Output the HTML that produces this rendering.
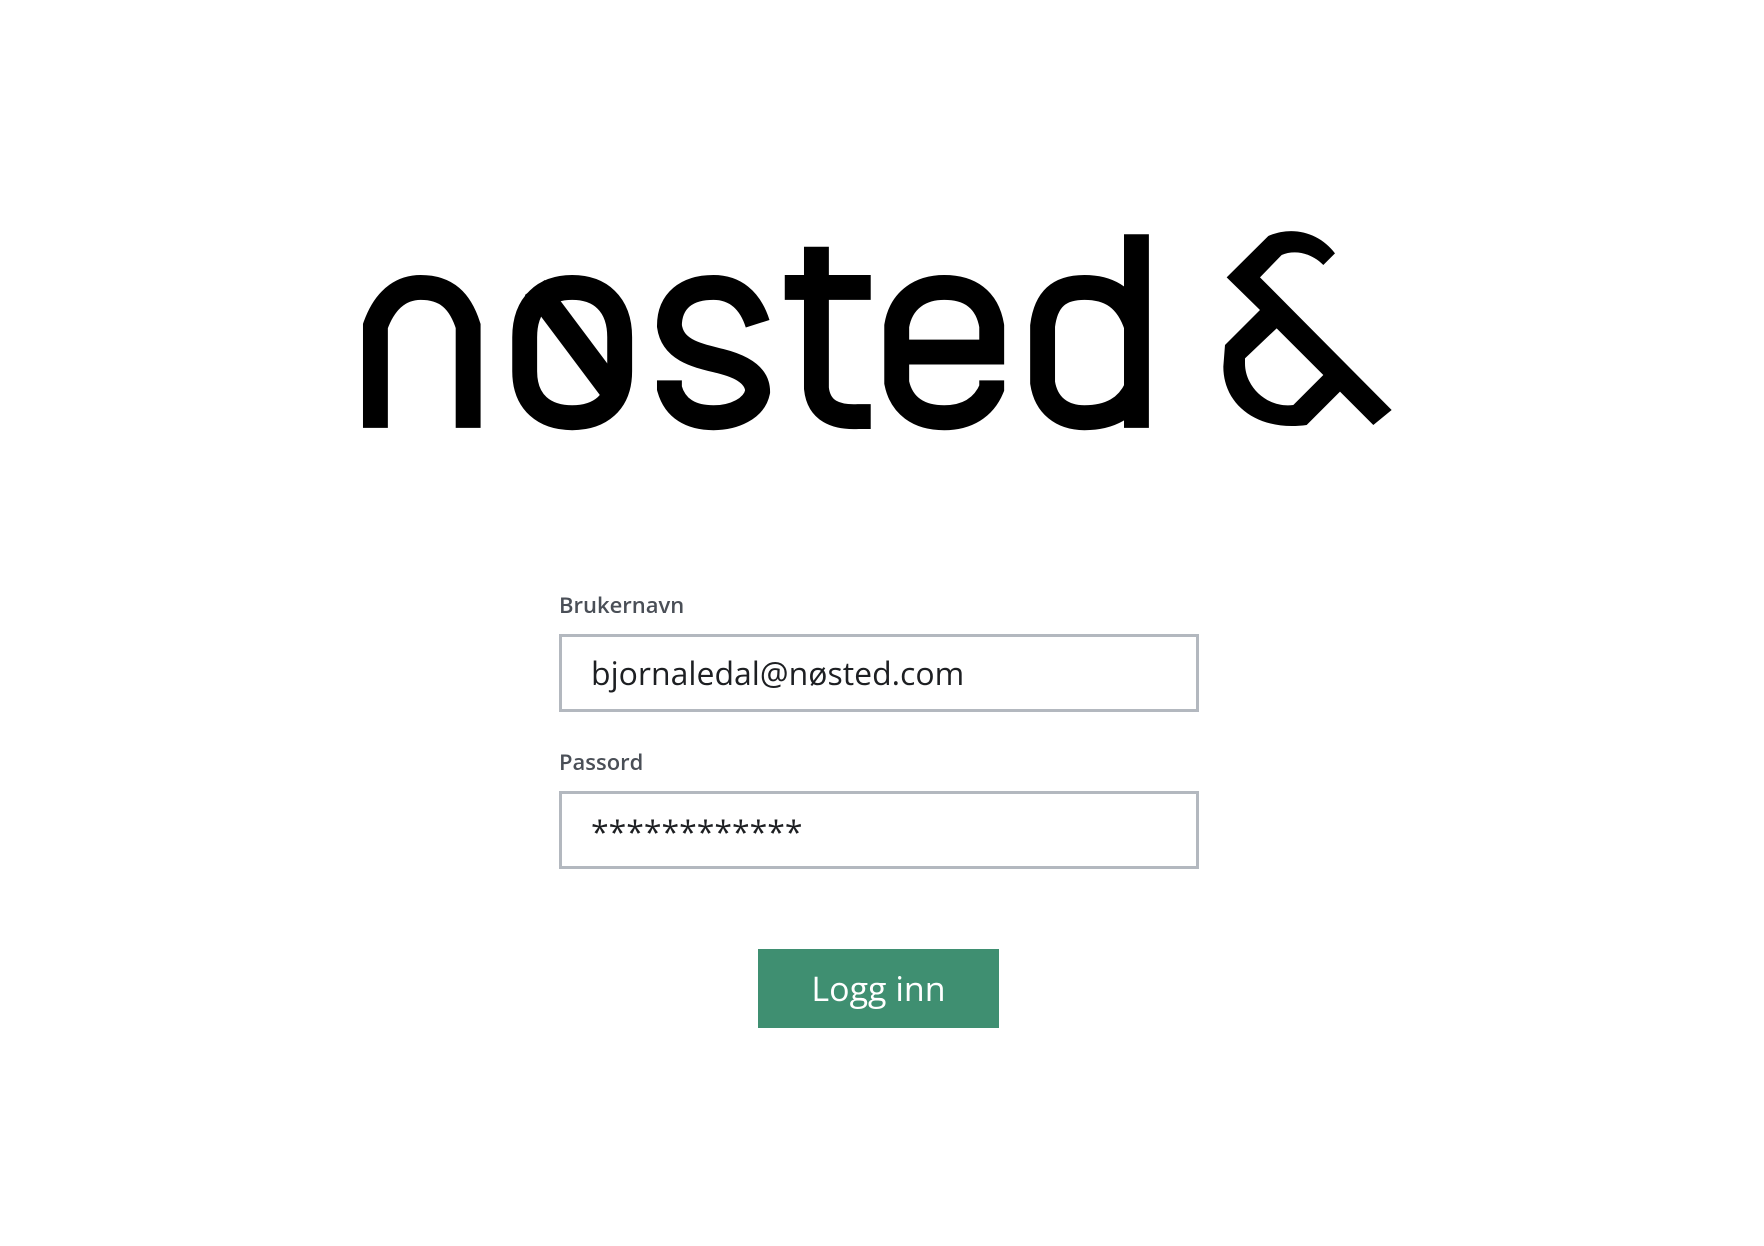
<!DOCTYPE html>
<html><head><meta charset="utf-8"><style>
html,body{margin:0;padding:0;background:#fff;width:1764px;height:1246px;overflow:hidden;font-family:"Open Sans","Liberation Sans",sans-serif;}
.lbl{position:absolute;left:559px;font-size:22px;font-weight:600;color:#4a4f57;}
.inp{position:absolute;left:559px;width:634px;height:72px;border:3px solid #b3b8bf;background:#fff;}
.inp span{position:absolute;left:29px;color:#1d1f22;font-size:32px;}
.btn{position:absolute;left:758px;top:949px;width:241px;height:79px;background:#3f8f71;color:#fff;font-size:34px;text-align:center;line-height:79px;}
svg{position:absolute;left:0;top:0;}
</style></head><body>
<svg width="1764" height="1246" viewBox="0 0 1764 1246">
<g transform="translate(-3.4,-2.5) scale(1.1308,1.1327)" fill="none" stroke="#000" stroke-width="22">
<path d="M335 380 V290 C345 262 362 256 375 256 C398 256 410 268 417 290 V380"/>
<path d="M467 300 C467 270 485 256 509 256 C533 256 551 270 551 300 V330 C551 358 533 371 509 371 C485 371 467 358 467 330 Z"/>
<path d="M476 256 L545 348"/>
<path d="M673 288 C666 266 652 256 634 256 C610 256 595 268 595 290 C598 312 620 316 640 321 C660 326 673 334 673 348 C670 363 652 371 634 371 C614 371 600 363 595 345 V338"/>
<path d="M725 220 V345 C727 365 742 371 762 370 H773"/>
<path d="M697 256 H773"/>
<path d="M880 338 V345 C873 362 858 371 838 371 C815 371 800 360 796 340 V290 C800 266 818 256 838 256 C860 256 876 266 880 290 V313 H796"/>
<path d="M1008 290 C1000 266 985 256 962 256 C940 256 928 266 925 290 V340 C928 360 942 371 962 371 C985 371 1000 362 1008 345"/>
<path d="M1008 209 V380"/>
</g>
<g transform="translate(1210,220) scale(0.3333)">
<path fill="#000" fill-rule="evenodd" d="M50 172 L175 48 C250 15 330 40 375 100 L340 135 C300 95 250 90 215 105 L150 172 L545 570 L490 615 L390 515 L290 615 C150 635 40 560 40 440 L45 375 L150 270 Z M200 325 L340 465 L250 555 C170 565 105 500 105 430 L105 415 Z"/>
</g>
</svg>
<div class="lbl" style="top:590px">Brukernavn</div>
<div class="inp" style="top:634px"><span style="top:15px">bjornaledal@nøsted.com</span></div>
<div class="lbl" style="top:747px">Passord</div>
<div class="inp" style="top:791px"><span style="top:17px">************</span></div>
<div class="btn">Logg inn</div>
</body></html>
